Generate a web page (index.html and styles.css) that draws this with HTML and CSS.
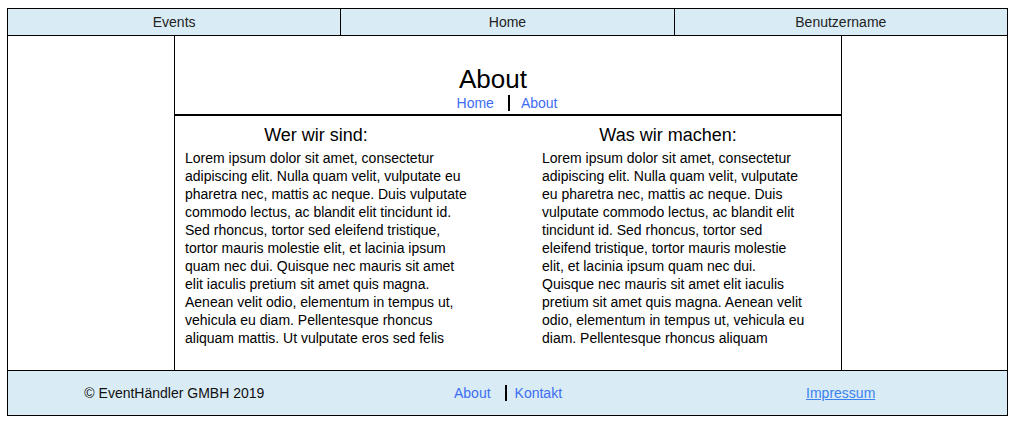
FILE: index.html
```html
<!DOCTYPE html>
<html lang="de">
<head>
<meta charset="utf-8">
<title>About</title>
<link rel="stylesheet" href="styles.css">
</head>
<body>
<div class="page">
  <nav class="topnav">
    <a class="topnav-item" href="#">Events</a>
    <a class="topnav-item" href="#">Home</a>
    <a class="topnav-item" href="#">Benutzername</a>
  </nav>
  <main class="layout">
    <aside class="side"></aside>
    <section class="center">
      <header class="page-head">
        <h1 class="title">About</h1>
        <div class="crumbs">
          <a class="crumb" href="#">Home</a><a class="crumb crumb-sep" href="#">About</a>
        </div>
      </header>
      <div class="cols">
        <article class="col col-left">
          <h2 class="col-title">Wer wir sind:</h2>
          <p class="col-text">Lorem ipsum dolor sit amet, consectetur adipiscing elit. Nulla quam velit, vulputate eu pharetra nec, mattis ac neque. Duis vulputate commodo lectus, ac blandit elit tincidunt id. Sed rhoncus, tortor sed eleifend tristique, tortor mauris molestie elit, et lacinia ipsum quam nec dui. Quisque nec mauris sit amet elit iaculis pretium sit amet quis magna. Aenean velit odio, elementum in tempus ut, vehicula eu diam. Pellentesque rhoncus aliquam mattis. Ut vulputate eros sed felis</p>
        </article>
        <article class="col col-right">
          <h2 class="col-title">Was wir machen:</h2>
          <p class="col-text">Lorem ipsum dolor sit amet, consectetur adipiscing elit. Nulla quam velit, vulputate eu pharetra nec, mattis ac neque. Duis vulputate commodo lectus, ac blandit elit tincidunt id. Sed rhoncus, tortor sed eleifend tristique, tortor mauris molestie elit, et lacinia ipsum quam nec dui. Quisque nec mauris sit amet elit iaculis pretium sit amet quis magna. Aenean velit odio, elementum in tempus ut, vehicula eu diam. Pellentesque rhoncus aliquam</p>
        </article>
      </div>
    </section>
    <aside class="side side-right"></aside>
  </main>
  <footer class="footer">
    <div class="footer-cell">© EventHändler GMBH 2019</div>
    <div class="footer-cell footer-links">
      <a class="flink" href="#">About</a><a class="flink flink-sep" href="#">Kontakt</a>
    </div>
    <div class="footer-cell">
      <a class="flink flink-under" href="#">Impressum</a>
    </div>
  </footer>
</div>
</body>
</html>
```

FILE: styles.css
```css
* { box-sizing: border-box; }

body {
  margin: 8px 7px;
  font-family: "Liberation Sans", Arial, sans-serif;
  font-size: 14px;
  color: #000;
  background: #fff;
}

.page {
  width: 1001px;
  border: 1px solid #000;
}

.topnav {
  display: flex;
  height: 27px;
  background: #d9ecf5;
  border-bottom: 1px solid #000;
}

.topnav-item {
  flex: 1;
  display: flex;
  align-items: center;
  justify-content: center;
  color: #222;
  text-decoration: none;
}

.topnav-item + .topnav-item {
  border-left: 1px solid #000;
}

.layout {
  display: grid;
  grid-template-columns: 166px 668px 165px;
  height: 334px;
}

.center {
  border-left: 1px solid #000;
  border-right: 1px solid #000;
}

.page-head {
  padding-top: 28px;
  padding-bottom: 3px;
  border-bottom: 2px solid #000;
  text-align: center;
}

.title {
  margin: 0;
  padding-right: 30px;
  font-size: 26px;
  font-weight: normal;
  line-height: 30px;
}

.crumbs {
  padding-top: 1px;
  padding-right: 2px;
  line-height: 16px;
  height: 17px;
}

.crumb {
  color: #3d6cf2;
  text-decoration: none;
}

.crumb-sep {
  margin-left: 14px;
  padding-left: 11px;
  border-left: 2px solid #000;
}

.cols {
  display: flex;
  padding-left: 10px;
}

.col-left {
  width: 290px;
}

.col-right {
  width: 268px;
  margin-left: 67px;
}

.col-title {
  margin: 9px 0 3px;
  font-size: 18px;
  font-weight: normal;
  line-height: 21px;
  text-align: center;
}

.col-left .col-title { padding-right: 28px; }
.col-right .col-title { padding-right: 16px; }

.col-text {
  margin: 0;
  line-height: 18px;
}

.footer {
  display: flex;
  height: 45px;
  background: #d9ecf5;
  border-top: 1px solid #000;
}

.footer-cell {
  flex: 1;
  display: flex;
  align-items: center;
  justify-content: center;
  padding-bottom: 1px;
  color: #111;
}

.footer-links {
  padding-left: 1px;
}

.flink {
  color: #3d6cf2;
  text-decoration: none;
}

.flink-sep {
  margin-left: 14px;
  padding-left: 8px;
  border-left: 2px solid #000;
}

.flink-under {
  color: #3b82f0;
  text-decoration: underline;
}
```
